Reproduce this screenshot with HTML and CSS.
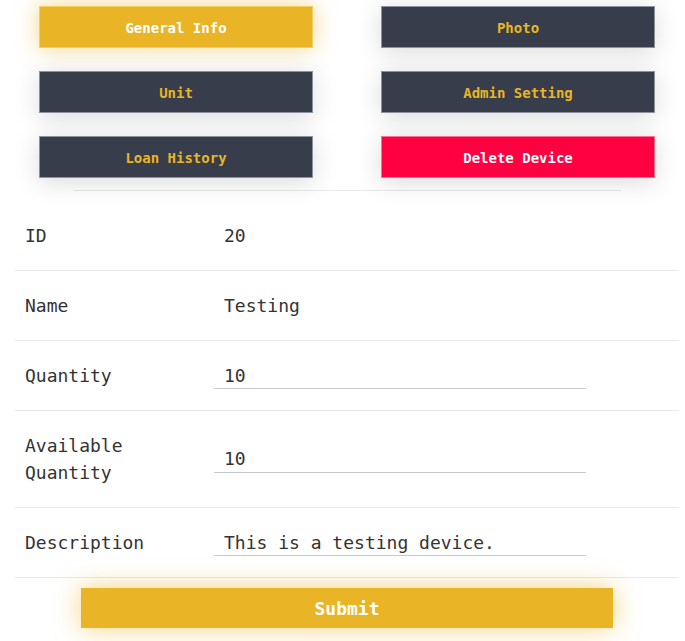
FILE: index.html
```html
<!DOCTYPE html>
<html lang="en">
<head>
<meta charset="utf-8">
<title>Device</title>
<link rel="stylesheet" href="styles.css">
</head>
<body>
<div class="page">
  <div class="tabs">
    <button class="tab tab-active">General Info</button>
    <button class="tab">Photo</button>
    <button class="tab">Unit</button>
    <button class="tab">Admin Setting</button>
    <button class="tab">Loan History</button>
    <button class="tab tab-danger">Delete Device</button>
  </div>
  <div class="sep"></div>
  <table class="info">
    <tr><td class="label">ID</td><td class="value">20</td></tr>
    <tr><td class="label">Name</td><td class="value">Testing</td></tr>
    <tr><td class="label">Quantity</td><td class="field"><input class="input" type="text" value="10"></td></tr>
    <tr><td class="label">Available Quantity</td><td class="field"><input class="input" type="text" value="10"></td></tr>
    <tr><td class="label">Description</td><td class="field"><input class="input" type="text" value="This is a testing device."></td></tr>
  </table>
  <div class="actions"><button class="submit">Submit</button></div>
</div>
</body>
</html>
```
FILE: styles.css
```css
html, body {
  margin: 0;
  padding: 0;
  background: #ffffff;
}
body {
  font-family: "DejaVu Sans Mono", "Liberation Mono", monospace;
  color: #333333;
  width: 685px;
  height: 641px;
  overflow: hidden;
}
.page {
  padding-top: 6px;
}
.tabs {
  display: grid;
  grid-template-columns: 274px 274px;
  column-gap: 68px;
  row-gap: 23px;
  padding-left: 39px;
}
.tab {
  box-sizing: border-box;
  height: 42px;
  margin: 0;
  padding: 1px 0 0;
  font-family: inherit;
  font-size: 14px;
  font-weight: bold;
  color: #e9b526;
  background: #373d4a;
  border: 1px solid #8c919b;
  box-shadow: 0 4px 26px rgba(0, 0, 0, 0.15);
  cursor: pointer;
}
.tab-active {
  color: #ffffff;
  background: #e9b526;
  border-color: #f2cd66;
  box-shadow: 0 0 22px rgba(233, 181, 38, 0.55);
}
.tab-danger {
  color: #ffffff;
  background: #ff0040;
  border-color: #ff6f8f;
}
.sep {
  margin: 12px 0 0 73px;
  width: 548px;
  height: 1px;
  background: #e9e9e9;
}
.info {
  margin: 10px 0 0 15px;
  width: 664px;
  border-collapse: collapse;
  font-size: 18px;
  line-height: 27px;
}
.info td {
  padding: 21px 10px;
  border-bottom: 1px solid #e8e8e8;
  vertical-align: middle;
}
.info td.label {
  width: 179px;
}
.info td.field {
  padding-left: 0;
}
.input {
  box-sizing: border-box;
  display: block;
  width: 372px;
  height: 27px;
  margin: 0;
  padding: 0 10px;
  font-family: inherit;
  font-size: 18px;
  color: #333333;
  background: transparent;
  border: none;
  border-bottom: 1px solid #c8c8c8;
  outline: none;
}
.actions {
  padding: 10px 0 0 81px;
}
.submit {
  width: 532px;
  height: 40px;
  margin: 0;
  padding: 0;
  font-family: inherit;
  font-size: 18px;
  font-weight: bold;
  color: #ffffff;
  background: #e9b526;
  border: none;
  box-shadow: 0 0 26px rgba(233, 181, 38, 0.6);
}
```
